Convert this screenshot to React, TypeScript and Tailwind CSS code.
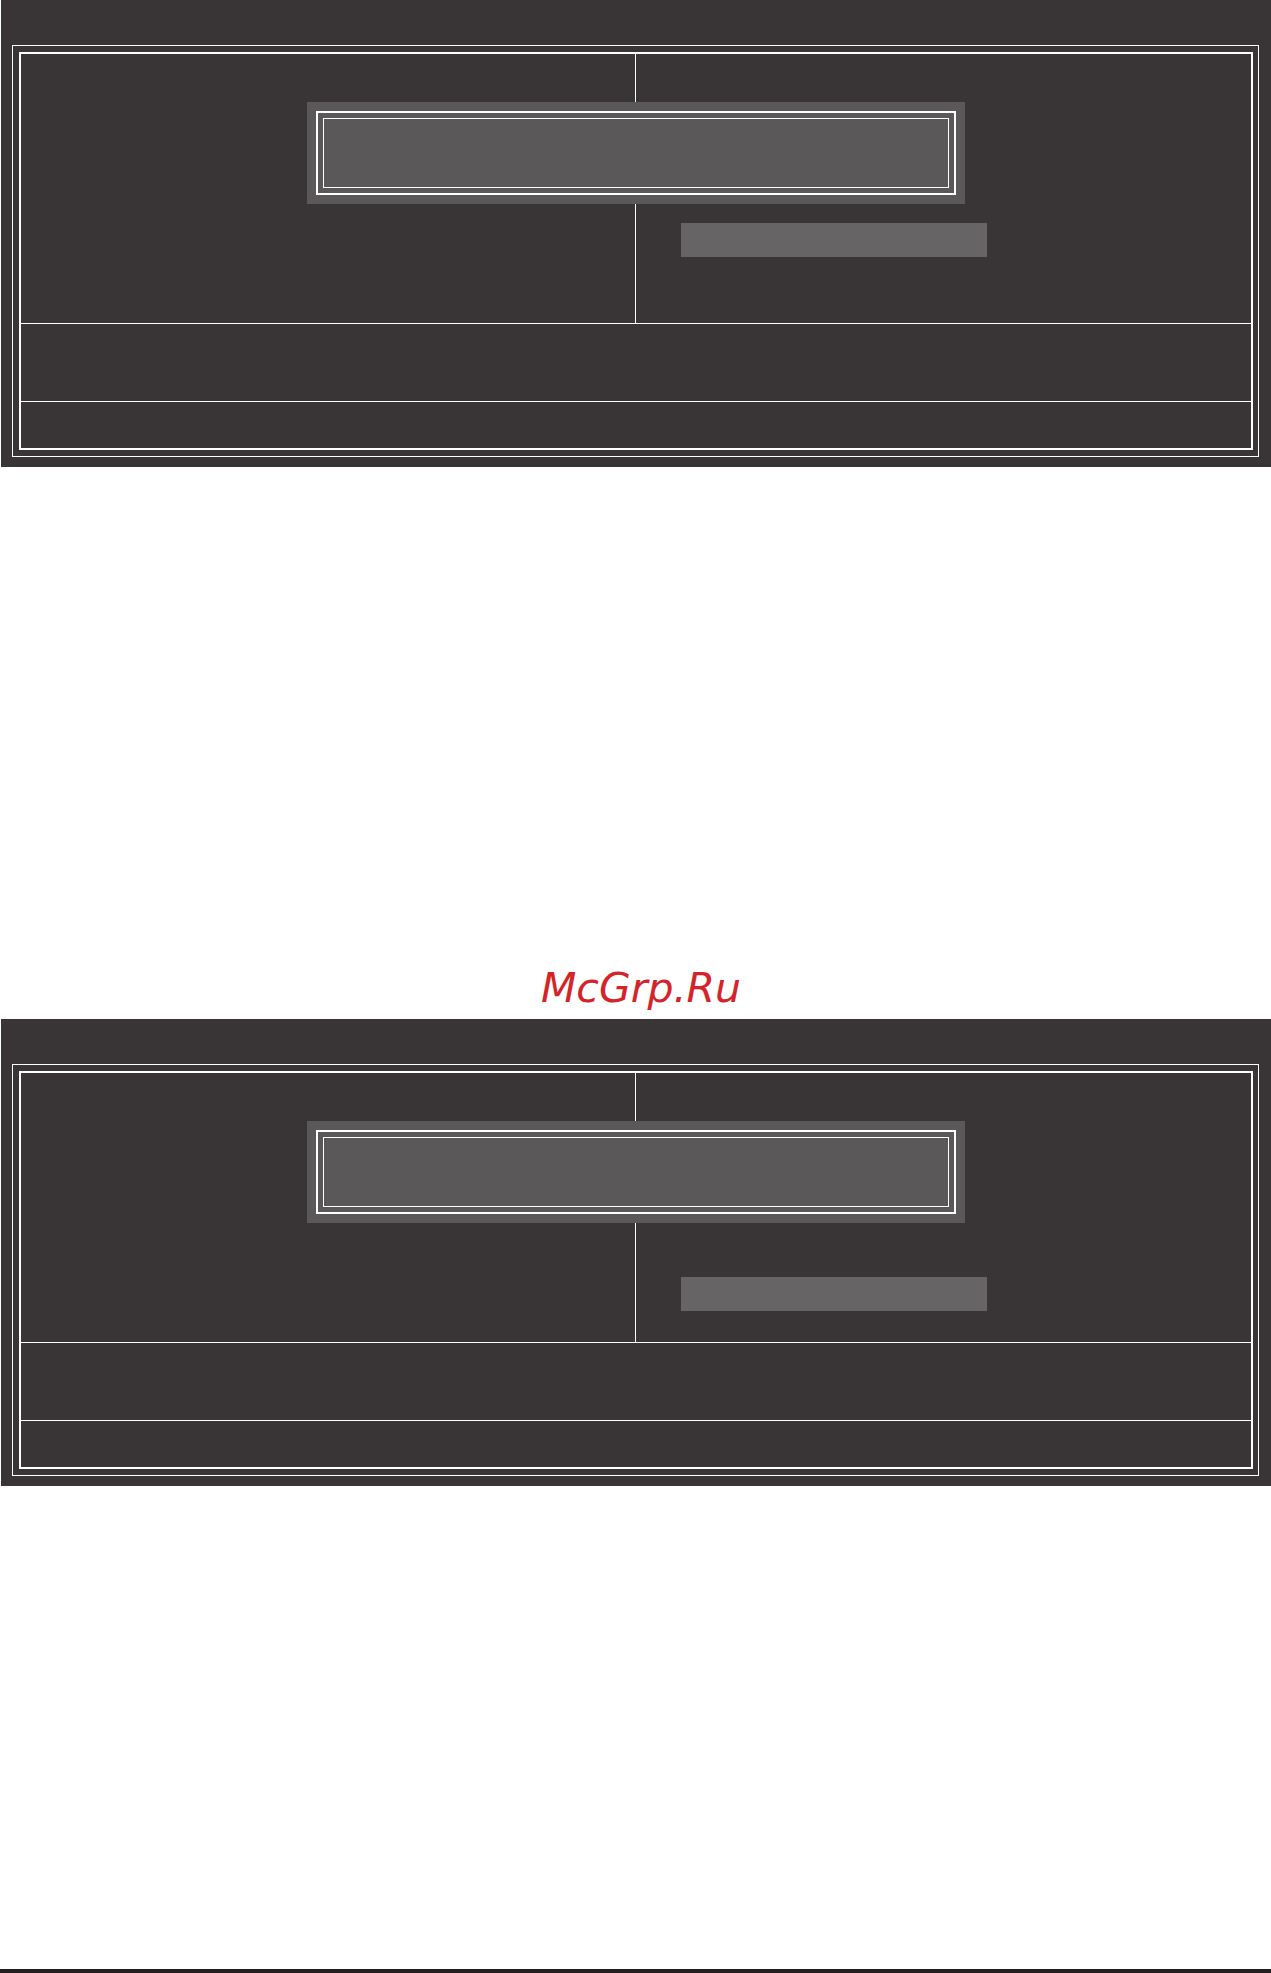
import React from 'react';

interface BiosPanelProps {
  barTop: string;
}

function BiosPanel({ barTop }: BiosPanelProps) {
  return (
    <div className="ml-[1px] h-[467px] w-[1270px] bg-[#393536] pt-[45px] pl-[11px]">
      {/* outer double frame */}
      <div className="h-[412px] w-[1247px] border border-white py-[6px] pl-[6px] pr-[5px]">
        <div className="flex h-full w-full flex-col border-2 border-white">
          {/* top area: two columns with dialog on top */}
          <div className="relative flex h-[270px] border-b border-white">
            <div className="w-[615px] border-r border-white" />
            <div className="flex-1">
              <div className={`ml-[45px] h-[34px] w-[306px] bg-[#666465] ${barTop}`} />
            </div>

            {/* dialog box */}
            <div className="absolute left-[286px] top-[48px] h-[102px] w-[658px] bg-[#5b5859] p-[9px]">
              <div className="h-full w-full border-2 border-white p-[5px]">
                <div className="h-full w-full border border-white" />
              </div>
            </div>
          </div>

          {/* help area */}
          <div className="h-[78px] border-b border-white" />

          {/* key hints */}
          <div className="flex-1" />
        </div>
      </div>
    </div>
  );
}

export default function App() {
  return (
    <div className="min-h-[1973px] w-[1271px] bg-white" style={{ fontFamily: '"DejaVu Sans", sans-serif' }}>
      <BiosPanel barTop="mt-[169px]" />

      <div className="mt-[501px] mb-[11px] h-[40px] pl-[541px] text-[41px] italic leading-none text-[#d42429]">
        McGrp.Ru
      </div>

      <BiosPanel barTop="mt-[204px]" />

      <div className="mt-[483px] h-[4px] w-full bg-[#231f20]" />
    </div>
  );
}
